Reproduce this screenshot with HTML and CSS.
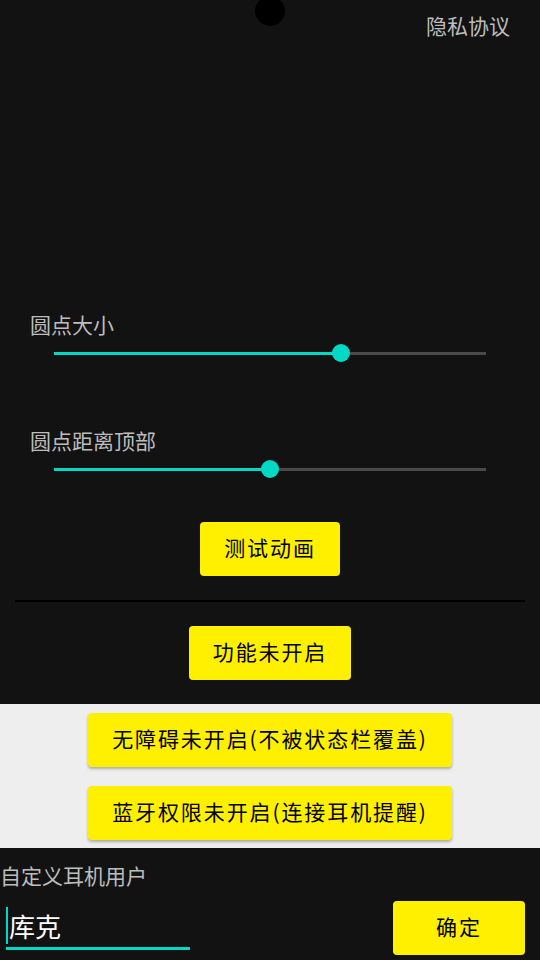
FILE: index.html
```html
<!DOCTYPE html>
<html lang="zh-CN">
<head>
<meta charset="utf-8">
<title>设置</title>
<link rel="stylesheet" href="styles.css">
</head>
<body>
<div class="notch"></div>
<main class="top">
  <header class="topbar"><span class="privacy">隐私协议</span></header>
  <section class="setting first">
    <div class="label">圆点大小</div>
    <div class="slider">
      <div class="track">
        <div class="fill" style="width:66.4%"></div>
        <div class="thumb" style="left:66.4%"></div>
      </div>
    </div>
  </section>
  <section class="setting second">
    <div class="label">圆点距离顶部</div>
    <div class="slider">
      <div class="track">
        <div class="fill" style="width:50%"></div>
        <div class="thumb" style="left:50%"></div>
      </div>
    </div>
  </section>
  <div class="center test"><button class="btn">测试动画</button></div>
  <hr class="divider">
  <div class="center"><button class="btn">功能未开启</button></div>
</main>
<section class="perms">
  <button class="btn raised">无障碍未开启(不被状态栏覆盖)</button>
  <button class="btn raised">蓝牙权限未开启(连接耳机提醒)</button>
</section>
<section class="custom">
  <div class="custom-label">自定义耳机用户</div>
  <div class="row">
    <div class="input">
      <div class="input-line"><span class="caret"></span><span class="value">库克</span></div>
      <div class="underline"></div>
    </div>
    <button class="btn confirm">确定</button>
  </div>
</section>
</body>
</html>
```
FILE: styles.css
```css
html, body {
  margin: 0;
  padding: 0;
  background: #121212;
}
body {
  width: 540px;
  height: 960px;
  overflow: hidden;
  position: relative;
  font-family: "Noto Sans CJK SC", "Noto Sans", Roboto, sans-serif;
  color: #bdbdbd;
}
.notch {
  position: absolute;
  top: -4px;
  left: 255px;
  width: 30px;
  height: 30px;
  border-radius: 50%;
  background: #000;
}
.top {
  display: flex;
  flex-direction: column;
  padding-bottom: 24px;
}
.topbar {
  display: flex;
  justify-content: flex-end;
  padding: 15px 30px 1px 0;
}
.privacy {
  font-size: 21px;
  line-height: 21px;
  color: #bdbdbd;
}
.setting.first { margin-top: 278px; }
.setting.second { margin-top: 61px; }
.label {
  padding-left: 30px;
  padding-bottom: 2px;
  font-size: 21px;
  line-height: 19px;
  color: #bdbdbd;
}
.slider {
  height: 34px;
  display: flex;
  align-items: center;
  margin: 0 54px;
}
.track {
  position: relative;
  flex: 1;
  height: 3px;
  background: #4a4a4a;
}
.fill {
  height: 100%;
  background: #00d9c6;
}
.thumb {
  position: absolute;
  top: 50%;
  width: 18px;
  height: 18px;
  margin: -9px 0 0 -9px;
  border-radius: 50%;
  background: #00d9c6;
}
.center {
  display: flex;
  justify-content: center;
}
.center.test { margin-top: 36px; }
.divider {
  margin: 24px 15px;
  border: 0;
  height: 2px;
  background: #000;
}
.btn {
  height: 54px;
  padding: 0 24px 3px;
  border: 0;
  border-radius: 4px;
  background: #fff000;
  color: #000;
  font-family: "Noto Sans CJK SC", "Noto Sans", Roboto, sans-serif;
  font-size: 21px;
  font-weight: 400;
  letter-spacing: 1.9px;
  line-height: 21px;
}
.perms {
  background: #eeeeee;
  display: flex;
  flex-direction: column;
  align-items: center;
  gap: 19px;
  padding: 9px 0 8px;
}
.raised {
  width: 364px;
  padding: 0 0 3px;
  box-shadow: 0 2px 3px rgba(0, 0, 0, 0.28);
}
.custom {
  padding-top: 18px;
}
.custom-label {
  font-size: 21px;
  line-height: 19px;
  padding-bottom: 2px;
  color: #bdbdbd;
}
.row {
  display: flex;
  justify-content: space-between;
  align-items: flex-start;
  margin-top: 14px;
  padding-right: 15px;
}
.input {
  margin: 6px 0 0 6px;
  width: 184px;
}
.input-line {
  height: 37px;
  display: flex;
  align-items: center;
}
.caret {
  align-self: stretch;
  width: 2px;
  background: #00d9c6;
}
.value {
  font-size: 26px;
  line-height: 26px;
  color: #ffffff;
  padding-left: 1px;
}
.underline {
  margin-top: 3px;
  height: 3px;
  background: #00d9c6;
}
.confirm {
  width: 132px;
  padding: 0 0 3px;
}
```
